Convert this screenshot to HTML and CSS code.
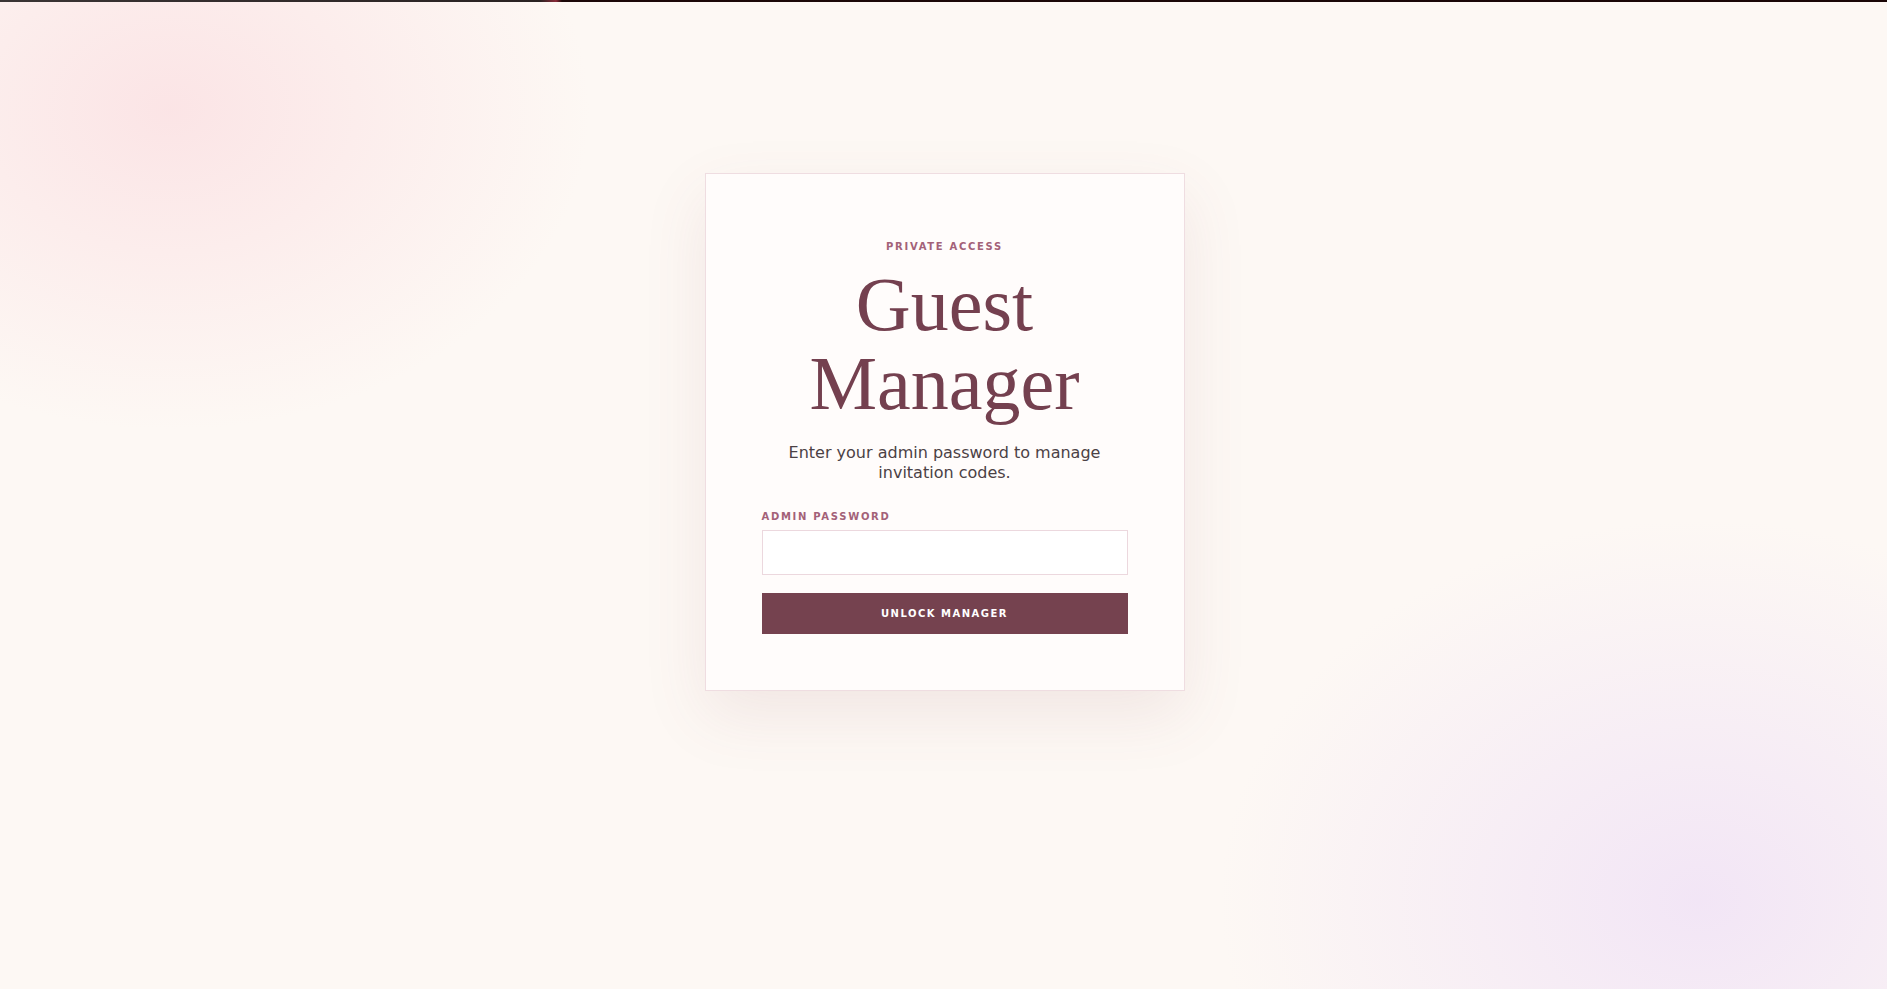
FILE: index.html
```html
<!DOCTYPE html>
<html lang="en">
<head>
<meta charset="utf-8">
<title>Guest Manager</title>
<link rel="stylesheet" href="styles.css">
</head>
<body>
<div class="topbar"></div>
<main class="page">
  <section class="card">
    <p class="eyebrow">Private Access</p>
    <h1 class="title">Guest<br>Manager</h1>
    <p class="lead">Enter your admin password to manage invitation codes.</p>
    <form class="form">
      <label class="label" for="pw">Admin Password</label>
      <input class="input" id="pw" type="password">
      <button class="button" type="button">Unlock Manager</button>
    </form>
  </section>
</main>
</body>
</html>
```
FILE: styles.css
```css
html, body {
  margin: 0;
  padding: 0;
}
body {
  min-height: 989px;
  font-family: "DejaVu Sans", "Open Sans", sans-serif;
  background:
    radial-gradient(ellipse 420px 320px at 170px 110px, rgba(250, 215, 220, 0.6), rgba(250, 215, 220, 0) 100%),
    radial-gradient(ellipse 480px 380px at 1700px 900px, rgba(240, 226, 246, 0.85), rgba(240, 226, 246, 0) 100%),
    #fdf8f4;
  overflow: hidden;
}
.topbar {
  height: 2px;
  background: linear-gradient(90deg, #3a3434 0, #2a2222 540px, #8a2a38 556px, #1c0808 562px, #1a0606 100%);
}
.page {
  display: flex;
  flex-direction: column;
  align-items: center;
  padding-top: 171px;
  padding-left: 2px;
}
.card {
  box-sizing: border-box;
  width: 480px;
  height: 518px;
  padding: 65px 56px 54px;
  background: #fffcfb;
  border: 1px solid #efdde1;
  box-shadow: 0 24px 60px rgba(140, 80, 90, 0.10);
  text-align: center;
}
.eyebrow {
  margin: 0;
  font-family: "DejaVu Sans", sans-serif;
  font-size: 10px;
  line-height: 16px;
  font-weight: 600;
  letter-spacing: 1.7px;
  text-transform: uppercase;
  color: #a36178;
}
.title {
  margin: 10px 0 0;
  font-family: "Liberation Serif", "DejaVu Serif", serif;
  font-weight: 400;
  font-size: 76px;
  line-height: 79px;
  color: #74404f;
}
.lead {
  margin: 20px 0 0;
  font-size: 16px;
  line-height: 19.5px;
  color: #4b4145;
}
.form {
  display: flex;
  flex-direction: column;
  margin-top: 27px;
  text-align: left;
}
.label {
  font-size: 10px;
  line-height: 16px;
  font-weight: 600;
  letter-spacing: 1.7px;
  text-transform: uppercase;
  color: #a36178;
}
.input {
  box-sizing: border-box;
  margin-top: 5px;
  height: 45px;
  width: 100%;
  border: 1px solid #ecd8de;
  background: #ffffff;
  outline: none;
}
.button {
  margin-top: 18px;
  height: 41px;
  border: none;
  background: #75424f;
  color: #ffffff;
  font-family: "DejaVu Sans", sans-serif;
  font-size: 10px;
  font-weight: 700;
  letter-spacing: 1.5px;
  text-transform: uppercase;
}
```
